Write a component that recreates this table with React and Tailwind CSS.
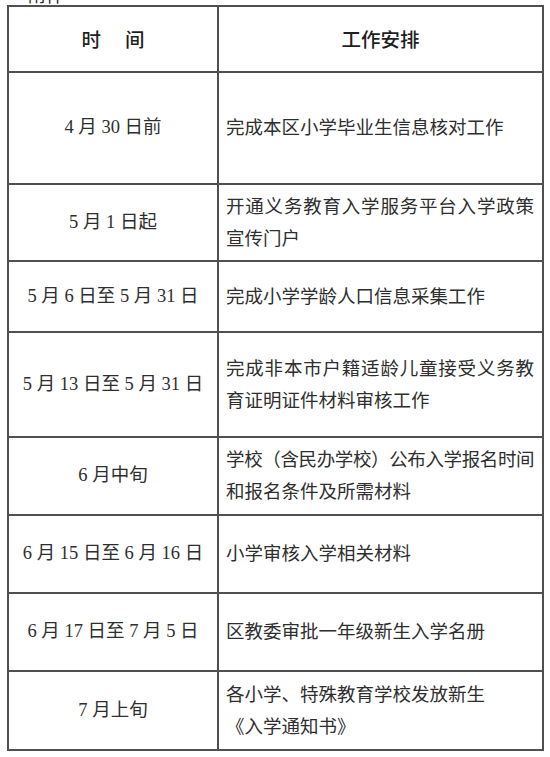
import React from "react";

const rows = [
  { time: "4 月 30 日前", work: ["完成本区小学毕业生信息核对工作"], h: "h-[112px]" },
  { time: "5 月 1 日起", work: ["开通义务教育入学服务平台入学政策", "宣传门户"], h: "h-[77px]", justify: true },
  { time: "5 月 6 日至 5 月 31 日", work: ["完成小学学龄人口信息采集工作"], h: "h-[71px]" },
  {
    time: "5 月 13 日至 5 月 31 日",
    work: ["完成非本市户籍适龄儿童接受义务教", "育证明证件材料审核工作"],
    h: "h-[105px]",
    justify: true,
  },
  {
    time: "6 月中旬",
    work: ["学校（含民办学校）公布入学报名时间", "和报名条件及所需材料"],
    h: "h-[78px]",
    justify: true,
    tight: true,
  },
  { time: "6 月 15 日至 6 月 16 日", work: ["小学审核入学相关材料"], h: "h-[78px]" },
  { time: "6 月 17 日至 7 月 5 日", work: ["区教委审批一年级新生入学名册"], h: "h-[78px]" },
  { time: "7 月上旬", work: ["各小学、特殊教育学校发放新生", "《入学通知书》"], h: "h-[79px]" },
];

const body = "font-['Liberation_Serif','Noto_Sans_CJK_SC',serif] text-[18.5px] text-[#2e2e2e]";
const cell = "border-r-2 border-b-2 border-[#505050] flex items-center";

export default function App() {
  return (
    <div className="w-[550px] h-[757px] bg-white">
      {/* page heading above the table, cut by the screenshot edge */}
      <div className="h-[5px] overflow-hidden pl-[28px]">
        <div className="-mt-[16px] font-['Noto_Sans_CJK_SC',sans-serif] text-[18px] leading-[20px] text-[#222]">
          附件
        </div>
      </div>
      <div className="ml-[7px] w-[537px] border-l-2 border-t-2 border-[#505050] grid grid-cols-[210px_325px]">
        <div className={`${cell} h-[66px] justify-center gap-[24px] font-['Noto_Sans_CJK_SC',sans-serif] text-[19.5px] font-medium text-[#1f1f1f]`}>
          <span>时</span>
          <span>间</span>
        </div>
        <div className={`${cell} h-[66px] justify-center font-['Noto_Sans_CJK_SC',sans-serif] text-[19.5px] font-medium text-[#1f1f1f]`}>
          工作安排
        </div>
        {rows.map((r) => (
          <React.Fragment key={r.time}>
            <div className={`${cell} ${r.h} justify-center ${body} whitespace-pre`}>{r.time}</div>
            <div className={`${cell} ${r.h} pl-[7px] pr-[8px] ${body}`}>
              <div className="w-full leading-[32px]">
                {r.work.map((line, i) => (
                  <div
                    key={i}
                    className={`whitespace-nowrap ${
                      r.justify && i === 0 ? "text-justify [text-align-last:justify]" : ""
                    } ${r.tight && i === 0 ? "tracking-[-0.6px]" : ""}`}
                  >
                    {line}
                  </div>
                ))}
              </div>
            </div>
          </React.Fragment>
        ))}
      </div>
    </div>
  );
}
